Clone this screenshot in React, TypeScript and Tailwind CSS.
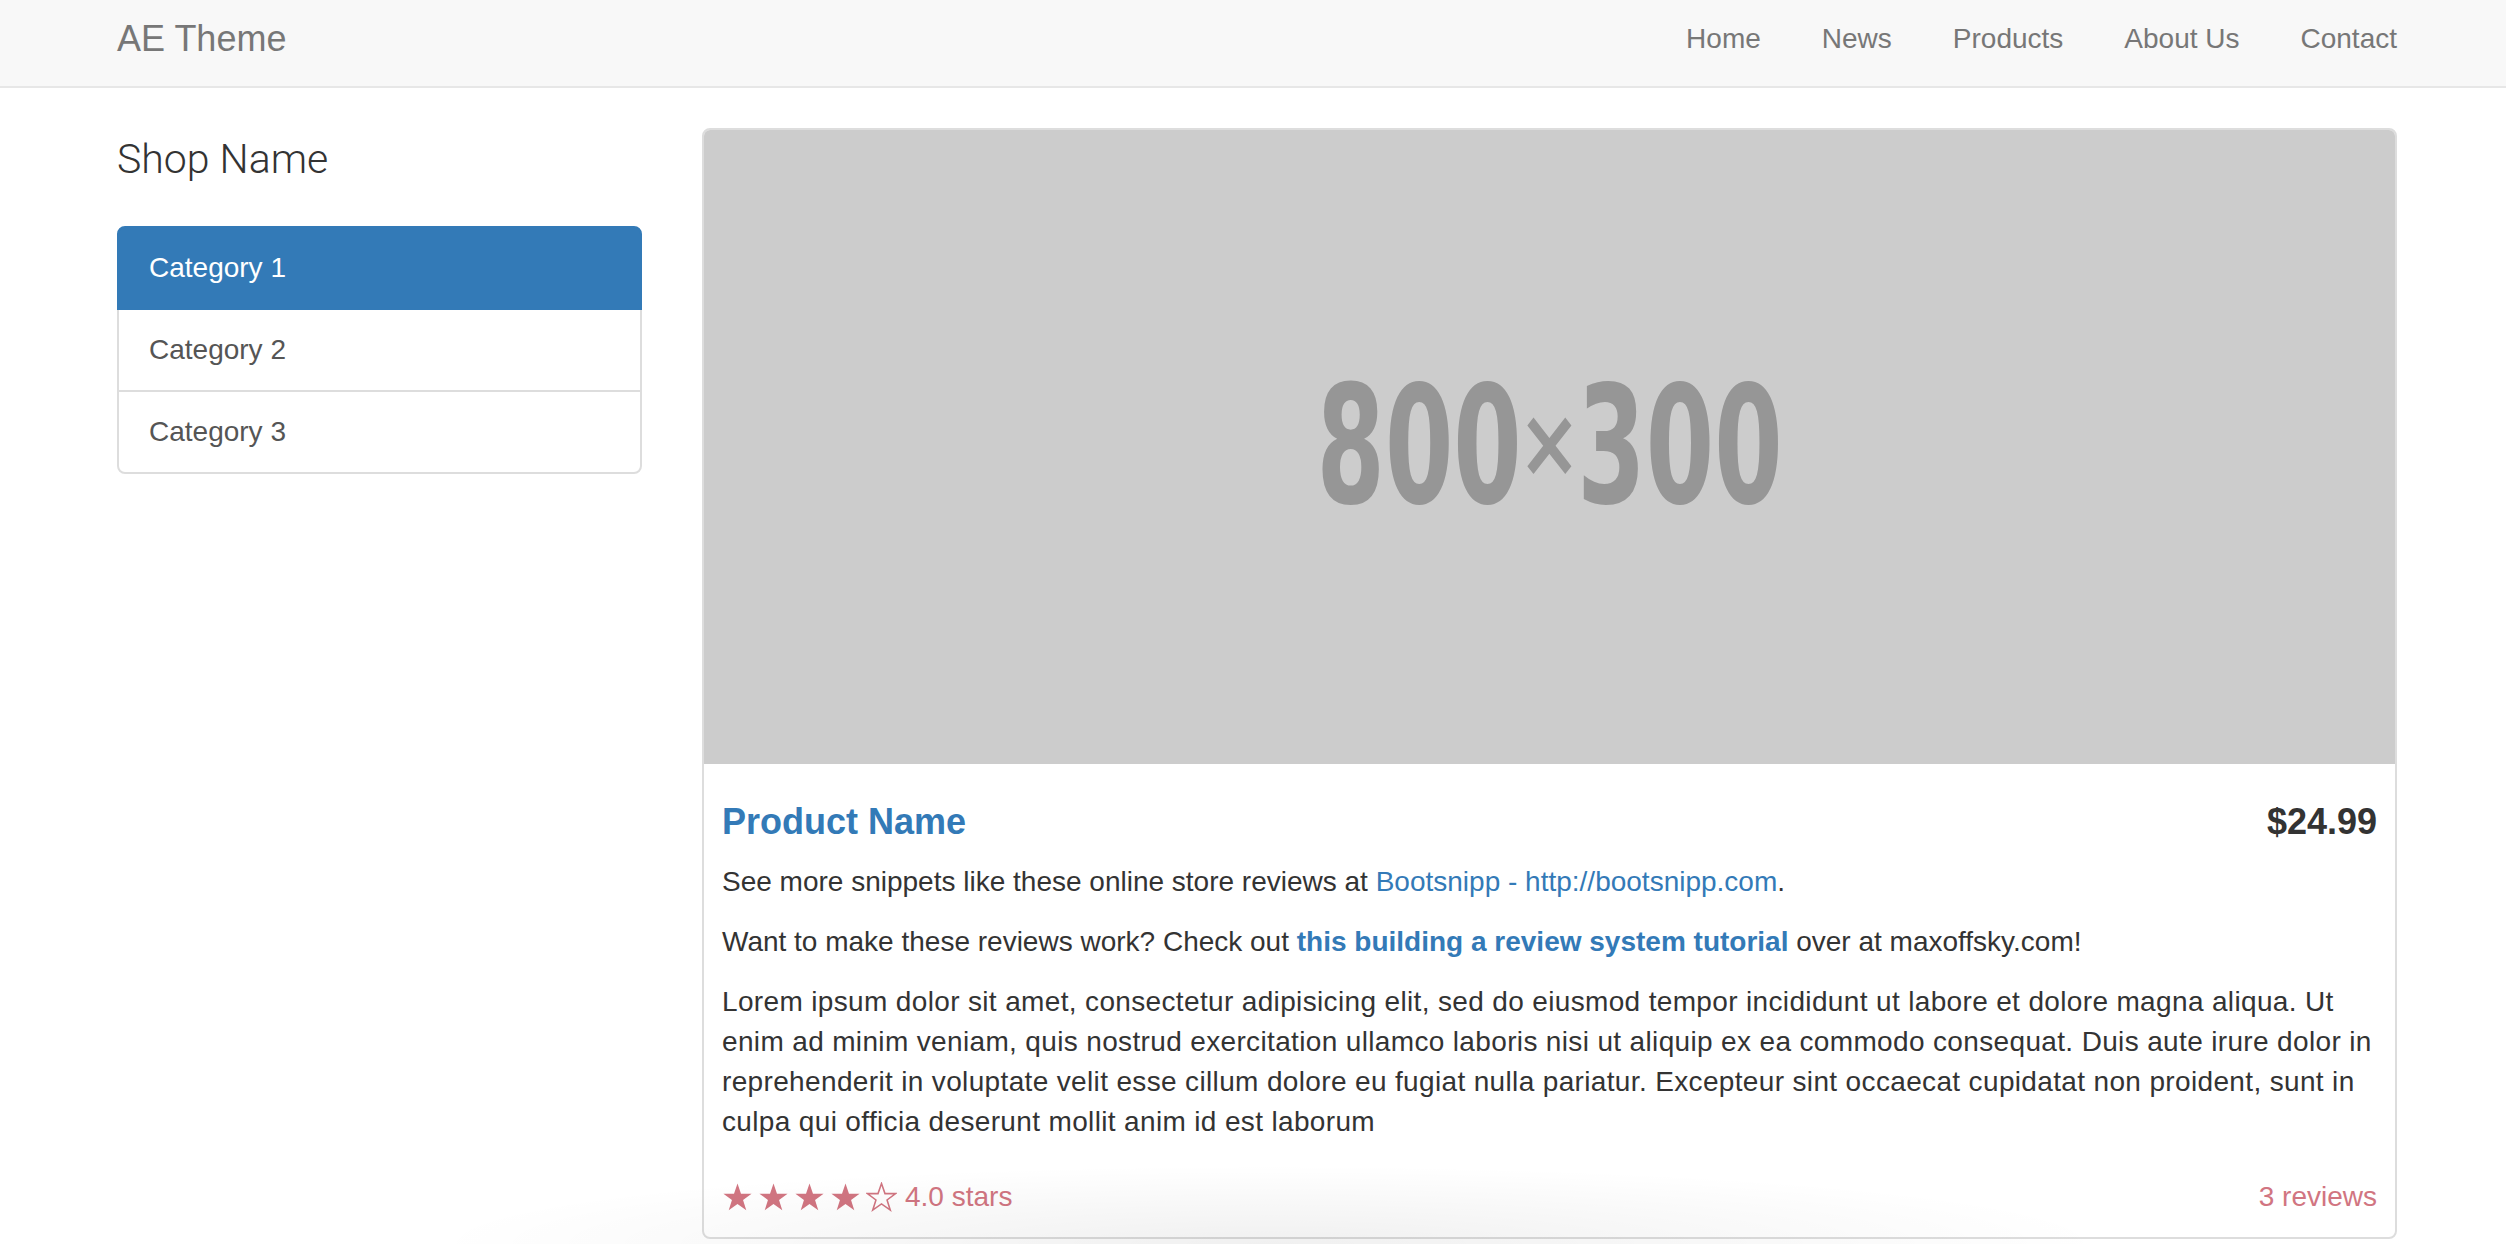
import React from "react";

const navLinks = ["Home", "News", "Products", "About Us", "Contact"];
const categories = ["Category 1", "Category 2", "Category 3"];

const Star = ({ filled }: { filled: boolean }) => (
  <svg
    viewBox="0 0 24 24"
    className="inline-block w-[31px] h-[31px]"
    fill={filled ? "#d17581" : "none"}
    stroke="#d17581"
    strokeWidth={filled ? 0 : 1.2}
  >
    <polygon points="12,1.2 14.7,9 22.9,9 16.3,13.9 18.8,21.8 12,17 5.2,21.8 7.7,13.9 1.1,9 9.3,9" />
  </svg>
);

const App = () => {
  return (
    <div className="relative h-[1244px] overflow-hidden bg-white font-['Liberation_Sans',Arial,sans-serif] text-[28px] leading-[40px] text-[#333]">
      <nav className="h-[88px] bg-[#f8f8f8] border-b-2 border-[#e7e7e7]">
        <div className="ml-[87px] w-[2340px] px-[30px] pt-[19px] flex justify-between">
          <a className="text-[36px] leading-[40px] text-[#777]">AE Theme</a>
          <ul className="flex gap-[61px]">
            {navLinks.map((l) => (
              <li key={l}>
                <a className="text-[28px] leading-[40px] text-[#777]">{l}</a>
              </li>
            ))}
          </ul>
        </div>
      </nav>

      <div className="ml-[87px] w-[2340px] px-[30px] pt-[40px] flex gap-[60px]">
        <div className="w-[525px] shrink-0">
          <p className="font-['Roboto','Liberation_Sans',sans-serif] text-[41px] leading-[58px] font-light text-[#333] mb-[38px] pt-[2px]">
            Shop Name
          </p>
          <div className="flex flex-col">
            {categories.map((c, i) => (
              <a
                key={c}
                className={
                  i === 0
                    ? "relative z-10 -mb-[2px] px-[30px] py-[20px] border-2 border-[#337ab7] bg-[#337ab7] text-white rounded-t-[8px]"
                    : i === categories.length - 1
                    ? "px-[30px] py-[20px] border-2 border-[#ddd] bg-white text-[#555] rounded-b-[8px]"
                    : "-mb-[2px] px-[30px] py-[20px] border-2 border-[#ddd] bg-white text-[#555]"
                }
              >
                {c}
              </a>
            ))}
          </div>
        </div>

        <div className="w-[1695px] shrink-0">
          <div className="border-2 border-[#ddd] rounded-[8px] bg-white">
            <div className="h-[634px] bg-[#ccc] rounded-t-[6px] flex items-center justify-center overflow-hidden">
              <span className="font-['DejaVu_Sans',sans-serif] font-bold text-[164px] leading-none text-[#969696] scale-x-[0.6] flex items-center">
                800
                <span className="inline-block font-bold text-[96px] px-[6px] scale-x-[1.3] -translate-y-[4px]">×</span>
                300
              </span>
            </div>

            <div className="px-[18px] pt-[18px] pb-[15px]">
              <div className="flex justify-between mt-[20px] mb-[20px]">
                <h4 className="text-[36px] leading-[40px] font-bold text-[#337ab7]">
                  Product Name
                </h4>
                <h4 className="text-[36px] leading-[40px] font-bold text-[#333]">
                  $24.99
                </h4>
              </div>
              <p className="mb-[20px]">
                See more snippets like these online store reviews at{" "}
                <a className="text-[#337ab7]">Bootsnipp - http://bootsnipp.com</a>.
              </p>
              <p className="mb-[20px]">
                Want to make these reviews work? Check out{" "}
                <strong className="text-[#337ab7] font-bold">
                  this building a review system tutorial
                </strong>{" "}
                over at maxoffsky.com!
              </p>
              <p className="tracking-[0.35px]">
                Lorem ipsum dolor sit amet, consectetur adipisicing elit, sed do
                eiusmod tempor incididunt ut labore et dolore magna aliqua. Ut
                <br />
                enim ad minim veniam, quis nostrud exercitation ullamco laboris
                nisi ut aliquip ex ea commodo consequat. Duis aute irure dolor in
                <br />
                reprehenderit in voluptate velit esse cillum dolore eu fugiat
                nulla pariatur. Excepteur sint occaecat cupidatat non proident,
                sunt in
                <br />
                culpa qui officia deserunt mollit anim id est laborum
              </p>
            </div>

            <div className="px-[18px] pt-[20px] pb-[20px] flex justify-between text-[#d17581]">
              <p className="flex items-center gap-[5px]">
                <Star filled />
                <Star filled />
                <Star filled />
                <Star filled />
                <Star filled={false} />
                <span className="ml-[3px]">4.0 stars</span>
              </p>
              <p>3 reviews</p>
            </div>
          </div>
        </div>
      </div>

      <div className="pointer-events-none absolute bottom-0 left-[420px] w-[1700px] h-[80px] bg-[radial-gradient(ellipse_at_bottom,rgba(0,0,0,0.06),transparent_70%)]" />
    </div>
  );
};

export default App;
